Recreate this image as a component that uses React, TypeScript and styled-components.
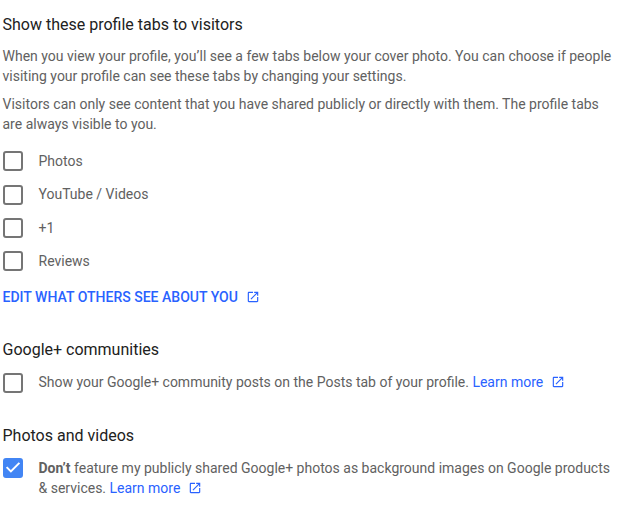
import React from 'react';
import styled, { createGlobalStyle } from 'styled-components';

const GlobalStyle = createGlobalStyle`
  * { box-sizing: border-box; }
  body { margin: 0; background: #fff; }
`;

const Page = styled.main`
  width: 626px;
  height: 516px;
  padding: 15px 0 0 2.5px;
  overflow: hidden;
  background: #fff;
  color: #616161;
  font: 400 14px/20px Roboto, sans-serif;
`;

const Section = styled.section<{ $gap?: number }>`
  margin-top: ${({ $gap = 0 }) => $gap}px;
`;

const Heading = styled.h2`
  margin: 0;
  color: #212121;
  font-size: 16px;
  font-weight: 400;
  line-height: 20px;
`;

const Paragraph = styled.p<{ $top: number }>`
  margin: ${({ $top }) => $top}px 0 0;
  white-space: nowrap;
`;

const OptionList = styled.div`
  display: grid;
  grid-template-rows: 34px 33px 33px 20px;
  margin-top: 17px;
`;

const Option = styled.label`
  display: flex;
  align-items: flex-start;
  gap: 16px;
  white-space: nowrap;
`;

const OptionText = styled.span<{ $raised?: boolean }>`
  margin-top: ${({ $raised }) => ($raised ? -1 : 0)}px;
`;

const SettingRow = styled(Option)<{ $top: number }>`
  margin-top: ${({ $top }) => $top}px;
`;

const Box = styled.span<{ $checked?: boolean }>`
  display: flex;
  flex: none;
  width: 20px;
  height: 20px;
  border: 2px solid ${({ $checked }) => ($checked ? '#4285f4' : '#757575')};
  border-radius: 3px;
  background: ${({ $checked }) => ($checked ? '#4285f4' : '#fff')};
`;

const Link = styled.a`
  color: #2962ff;
  text-decoration: none;
`;

const EditLink = styled(Link)`
  display: block;
  margin-top: 16px;
  font-weight: 500;
  letter-spacing: 0.015px;
`;

const OpenIcon = styled.svg`
  width: 14px;
  height: 14px;
  margin-left: 8px;
  vertical-align: -2px;
  fill: currentColor;
`;

const ExternalIcon = () => (
  <OpenIcon viewBox="0 0 24 24">
    <path d="M19 19H5V5h7V3H5c-1.11 0-2 .9-2 2v14c0 1.1.89 2 2 2h14c1.1 0 2-.9 2-2v-7h-2v7zM14 3v2h3.59l-9.83 9.83 1.41 1.41L19 6.41V10h2V3h-7z" />
  </OpenIcon>
);

const CheckMark = () => (
  <svg width="16" height="16" viewBox="0 0 16 16" fill="none">
    <path d="M1.6 7.1l4.3 4.3L14.4 2.9" stroke="#fff" strokeWidth="2" />
  </svg>
);

const tabs = [
  { label: 'Photos' },
  { label: 'YouTube / Videos', raised: true },
  { label: '+1' },
  { label: 'Reviews' },
];

export default function App() {
  return (
    <Page>
      <GlobalStyle />
      <Section>
        <Heading>Show these profile tabs to visitors</Heading>
        <Paragraph $top={11}>
          When you view your profile, you’ll see a few tabs below your cover photo. You can choose if people<br />
          visiting your profile can see these tabs by changing your settings.
        </Paragraph>
        <Paragraph $top={8}>
          Visitors can only see content that you have shared publicly or directly with them. The profile tabs<br />
          are always visible to you.
        </Paragraph>
        <OptionList>
          {tabs.map(({ label, raised }) => (
            <Option key={label}><Box /><OptionText $raised={raised}>{label}</OptionText></Option>
          ))}
        </OptionList>
        <EditLink>EDIT WHAT OTHERS SEE ABOUT YOU<ExternalIcon /></EditLink>
      </Section>
      <Section $gap={33}>
        <Heading>Google+ communities</Heading>
        <SettingRow $top={13}>
          <Box />
          <OptionText $raised>Show your Google+ community posts on the Posts tab of your profile. <Link>Learn more<ExternalIcon /></Link></OptionText>
        </SettingRow>
      </Section>
      <Section $gap={33}>
        <Heading>Photos and videos</Heading>
        <SettingRow $top={12}>
          <Box $checked><CheckMark /></Box>
          <OptionText><b>Don’t</b> feature my publicly shared Google+ photos as background images on Google products<br />&amp; services. <Link>Learn more<ExternalIcon /></Link></OptionText>
        </SettingRow>
      </Section>
    </Page>
  );
}
